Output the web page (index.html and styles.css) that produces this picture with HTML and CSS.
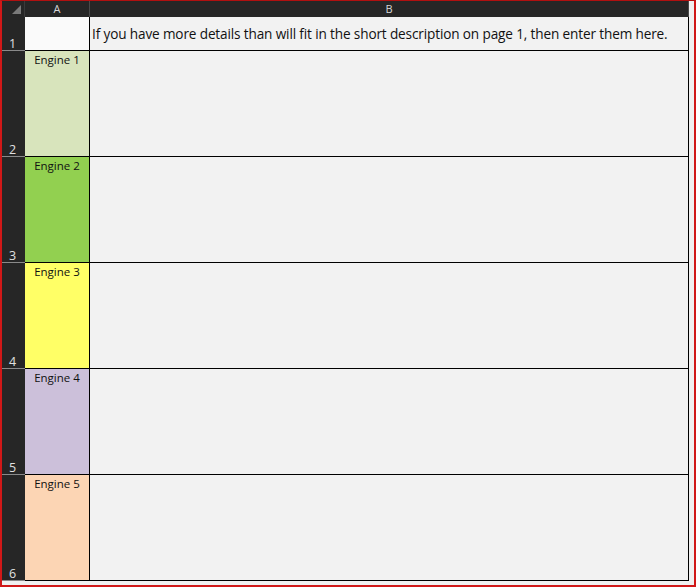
FILE: index.html
```html
<!DOCTYPE html>
<html>
<head>
<meta charset="utf-8">
<link rel="stylesheet" href="styles.css">
</head>
<body>
<div class="frame">
  <div class="sheet">
    <div class="corner"><span class="tri"></span></div>
    <div class="colhead colhead-a">A</div>
    <div class="colhead colhead-b">B</div>

    <div class="rowhead row-1">1</div>
    <div class="cell a a1"></div>
    <div class="cell b b1">If you have more details than will fit in the short description on page 1, then enter them here.</div>

    <div class="rowhead row-big">2</div>
    <div class="cell a eng1">Engine 1</div>
    <div class="cell b"></div>

    <div class="rowhead row-big">3</div>
    <div class="cell a eng2">Engine 2</div>
    <div class="cell b"></div>

    <div class="rowhead row-big">4</div>
    <div class="cell a eng3">Engine 3</div>
    <div class="cell b"></div>

    <div class="rowhead row-big">5</div>
    <div class="cell a eng4">Engine 4</div>
    <div class="cell b"></div>

    <div class="rowhead row-big">6</div>
    <div class="cell a eng5">Engine 5</div>
    <div class="cell b"></div>
  </div>
</div>
</body>
</html>
```

FILE: styles.css
```css
* { box-sizing: border-box; }
html, body { margin: 0; padding: 0; }
body { width: 696px; height: 587px; overflow: hidden; background: #f0f0f0; }

.frame {
  width: 696px;
  height: 587px;
  border-top: 1px solid #b01010;
  border-left: 2px solid #d01818;
  border-right: 2px solid #d01818;
  border-bottom: 2px solid #d01818;
  background: #f0f0f0;
  font-family: "Open Sans", "Liberation Sans", sans-serif;
}

.sheet {
  display: grid;
  grid-template-columns: 23px 65px 599px;
  grid-template-rows: 16px 34px repeat(5, 106px);
}

.corner {
  background: #262626;
  position: relative;
  border-right: 1px solid #3a3a3a;
}
.tri {
  position: absolute;
  right: 3px;
  bottom: 3px;
  width: 0;
  height: 0;
  border-left: 9px solid transparent;
  border-bottom: 9px solid #7a7a7a;
}

.colhead {
  background: #262626;
  color: #d8d8d8;
  font-size: 11px;
  line-height: 16px;
  text-align: center;
  border-right: 1px solid #4a4a4a;
}

.rowhead {
  background: #262626;
  color: #e0e0e0;
  font-size: 12.5px;
  display: flex;
  align-items: flex-end;
  justify-content: center;
  line-height: 12px;
  border-bottom: 1px solid #8a8a8a;
  padding-right: 2px;
}

.cell {
  border-right: 1px solid #000;
  border-bottom: 1px solid #000;
  background: #f2f2f2;
}

.a {
  font-size: 11.5px;
  text-align: center;
  color: #111;
  padding-top: 2px;
  line-height: 14px;
}

.a1 { background: #fafafa; }

.b1 {
  font-size: 13.6px;
  color: #111;
  padding-left: 2px;
  padding-top: 8px;
  line-height: 18px;
  white-space: nowrap;
  letter-spacing: -0.14px;
}

.eng1 { background: #d8e4bc; }
.eng2 { background: #92d050; }
.eng3 { background: #ffff66; }
.eng4 { background: #ccc0da; }
.eng5 { background: #fcd5b4; }
```
